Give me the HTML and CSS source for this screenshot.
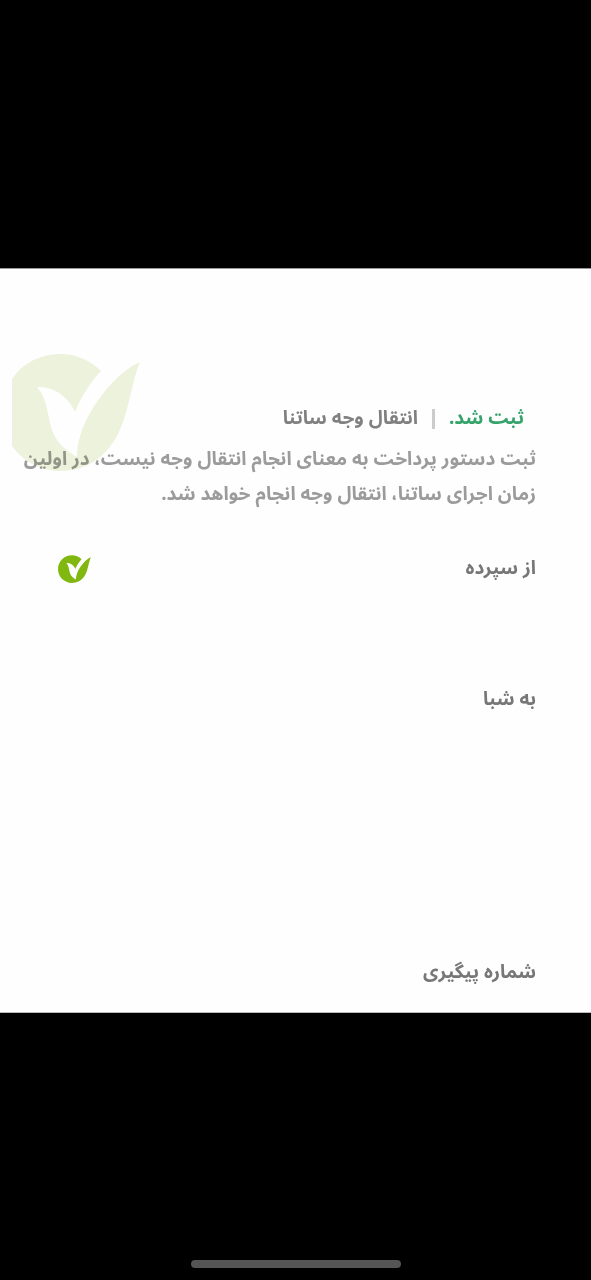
FILE: index.html
```html
<!DOCTYPE html>
<html lang="fa" dir="rtl">
<head>
<meta charset="utf-8">
<meta name="viewport" content="width=device-width, initial-scale=1">
<title>انتقال وجه ساتنا</title>
<link rel="stylesheet" href="styles.css">
</head>
<body>
<main class="receipt">
  <header class="status">
    <h1 class="status-state">ثبت شد.</h1>
    <span class="status-divider"></span>
    <p class="status-type">انتقال وجه ساتنا</p>
  </header>
  <p class="note">ثبت دستور پرداخت به معنای انجام انتقال وجه نیست، در اولین زمان اجرای ساتنا، انتقال وجه انجام خواهد شد.</p>
  <section class="row row-source">
    <h2 class="label">از سپرده</h2>
    <svg class="bank-logo" viewBox="-11 0 140 118" role="img" aria-label="بانک">
      <path d="M89 18C78 30 69 44 63 59C57 45 43 33 25 34C36 46 35 62 40 77C44 89 53 97 65 104C65 89 70 74 78 60C91 38 109 17 128 9C117 35 117 71 97 95C86 109 69 118 48 118C16 118 -11 92 -11 60C-11 27 16 1 48 1C64 1 78 7 89 18Z"/>
    </svg>
  </section>
  <section class="row row-target">
    <h2 class="label">به شبا</h2>
  </section>
  <section class="row">
    <h2 class="label">شماره پیگیری</h2>
  </section>
  <svg class="watermark" viewBox="0 0 129 118" aria-hidden="true">
    <path d="M0 26C11 10 28 1 48 1C64 1 78 7 89 18C78 30 69 44 63 59C57 45 43 33 25 34C36 46 35 62 40 77C44 89 53 97 65 104C65 89 70 74 78 60C91 38 109 17 128 9C117 35 117 71 97 95C86 109 69 118 48 118C29 118 11 108 0 93Z"/>
  </svg>
</main>
<div class="home-bar"></div>
</body>
</html>
```
FILE: styles.css
```css
* { box-sizing: border-box; }
body {
  margin: 0;
  min-height: 100vh;
  padding-top: 268px;
  display: flex;
  flex-direction: column;
  background: #000;
  font-family: "Noto Sans Arabic", "Noto Sans", "DejaVu Sans", sans-serif;
}
h1, h2, p {
  margin: 0;
  font-size: 19px;
  font-weight: 700;
  line-height: 35px;
}
.receipt {
  position: relative;
  padding: 132px 55px 22px 20px;
  background: #fefefe;
  border-top: 1px solid #999;
  border-bottom: 1px solid #bbb;
}
.watermark {
  position: absolute;
  left: 12px;
  top: 84px;
  width: 129px;
  height: 118px;
  fill: #eef3dd;
  mix-blend-mode: multiply;
}
.status {
  display: flex;
  align-items: center;
  gap: 14px;
  padding-right: 12px;
}
.status-state { color: #36a36b; }
.status-divider { width: 3px; height: 20px; background: #ccc; }
.status-type { color: #808080; }
.note { margin-top: 6px; color: #9b9b9b; }
.row {
  display: flex;
  align-items: center;
  justify-content: space-between;
}
.row-source { margin-top: 39px; margin-bottom: 96px; padding-left: 38px; }
.row-target { margin-bottom: 238px; }
.label { color: #777; }
.bank-logo { width: 33px; height: 28px; fill: #80b810; }
.home-bar {
  width: 210px;
  height: 8px;
  margin: auto auto 12px;
  border-radius: 4px;
  background: #555;
}
```
